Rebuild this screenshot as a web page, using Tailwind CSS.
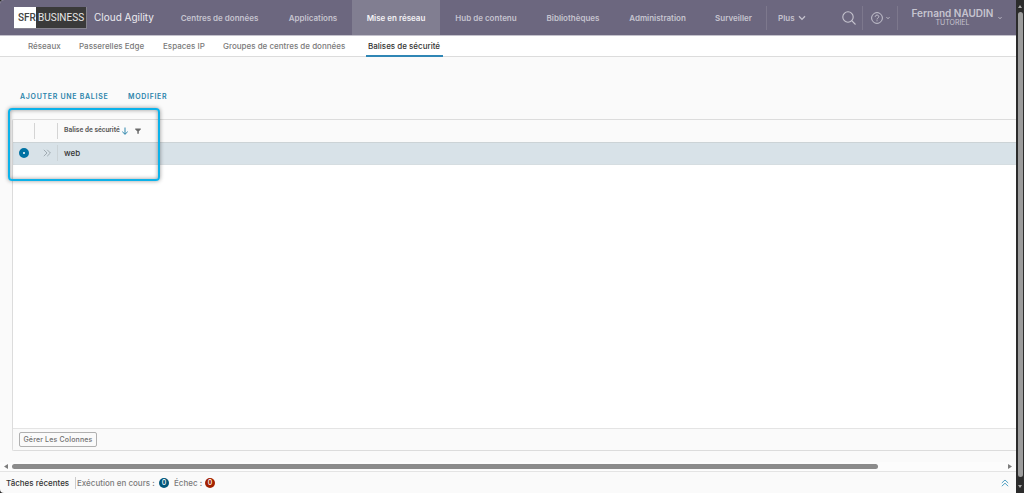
<!DOCTYPE html>
<html lang="fr">
<head>
<meta charset="utf-8">
<meta name="viewport" content="width=device-width, initial-scale=1">
<title>Cloud Agility – Balises de sécurité</title>
<script src="https://cdn.jsdelivr.net/npm/@tailwindcss/browser@4"></script>
</head>
<body class="flex h-screen overflow-hidden bg-[#2b2b2b] font-['Inter',sans-serif] text-[8px] text-[#565656]">
<div class="flex min-w-0 flex-1 flex-col overflow-hidden rounded-l-[4px] bg-[#fafafa]">
  <header class="flex h-9 shrink-0 items-center border-b border-[#c4c2cc] bg-[#6c677f] font-semibold text-[#c6c4cf]">
    <a href="#" class="ml-[14px] flex h-[22px] w-[73px] shrink-0 border-r border-b border-[#85838f] bg-[#3a3a3a] font-['Roboto',sans-serif] text-[10px] leading-[22px] font-normal text-[#e8e8e8]">
      <span class="w-[22px] bg-white pl-1 font-medium text-[#444]">SFR</span><span class="pl-[2px]">BUSINESS</span>
    </a>
    <span class="ml-[7px] w-[71px] shrink-0 text-[10px] font-normal whitespace-nowrap text-[#ebeaf0]">Cloud Agility</span>
    <nav class="flex h-full shrink-0 items-center whitespace-nowrap" aria-label="Principal">
      <a href="#" class="flex h-full w-[109px] items-center justify-center">Centres de données</a>
      <a href="#" class="flex h-full w-[78px] items-center justify-center">Applications</a>
      <a href="#" aria-current="page" class="flex h-full w-[88px] items-center justify-center bg-[#817e91] text-[#f3f2f5]">Mise en réseau</a>
      <a href="#" class="flex h-full w-[92px] items-center justify-center">Hub de contenu</a>
      <a href="#" class="flex h-full w-[82px] items-center justify-center">Bibliothèques</a>
      <a href="#" class="flex h-full w-[87px] items-center justify-center">Administration</a>
      <a href="#" class="flex h-full w-[65px] items-center justify-center">Surveiller</a>
      <button type="button" class="flex h-6 items-center gap-[3px] border-l border-[#7d788d] pl-[11px]">Plus
        <svg class="h-2 w-2" viewBox="0 0 8 8" fill="none" stroke="currentColor" stroke-width="1.3"><path d="M1 2.2 4 5.4 7 2.2"/></svg>
      </button>
    </nav>
    <div class="ml-auto flex h-6 shrink-0 items-center">
      <button type="button" aria-label="Rechercher" class="pr-[6px]">
        <svg class="h-[14px] w-[14px]" viewBox="0 0 14 14" fill="none" stroke="currentColor" stroke-width="1.1"><circle cx="6" cy="6" r="5.2"/><path d="m9.7 9.7 3.8 3.8"/></svg>
      </button>
      <button type="button" aria-label="Aide" class="flex h-6 w-9 items-center gap-[3px] border-x border-[#7d788d] pl-2">
        <svg class="h-3 w-3 shrink-0" viewBox="0 0 12 12" fill="none" stroke="currentColor" stroke-width="1"><circle cx="6" cy="6" r="5.4"/><path d="M4.2 4.8c0-2.3 3.6-2.3 3.6-.1 0 1.2-1.8 1.3-1.8 2.7M6 8.3v1"/></svg>
        <svg class="h-1 w-1 shrink-0" viewBox="0 0 4 4" fill="none" stroke="currentColor" stroke-width=".8"><path d="m.4 1 1.6 1.8L3.6 1"/></svg>
      </button>
      <button type="button" class="flex h-full items-center gap-1 pr-[14px] pl-[13px] whitespace-nowrap">
        <span class="flex w-[83px] flex-col items-center"><span class="text-[10px] leading-[11px]">Fernand NAUDIN</span><span class="text-[7px] leading-[8px] font-normal">TUTORIEL</span></span>
        <svg class="h-1 w-1" viewBox="0 0 4 4" fill="none" stroke="currentColor" stroke-width=".8"><path d="m.4 1 1.6 1.8L3.6 1"/></svg>
      </button>
    </div>
  </header>

  <nav class="flex h-[21px] shrink-0 items-stretch gap-[10px] border-b border-[#dcdcdc] bg-white pl-[26px] leading-[20px] font-medium whitespace-nowrap text-[#7a7a7a]" aria-label="Réseau">
    <a href="#" class="w-[41px] px-[2px]">Réseaux</a>
    <a href="#" class="w-[74px] px-[2px]">Passerelles Edge</a>
    <a href="#" class="w-[50px] px-[2px]">Espaces IP</a>
    <a href="#" class="w-[135px] px-[2px]">Groupes de centres de données</a>
    <a href="#" aria-current="page" class="-mb-px w-[77px] border-b-2 border-[#2f86b5] px-[2px] text-[#333]">Balises de sécurité</a>
  </nav>

  <main class="flex min-h-0 flex-1 flex-col pl-3">
    <div class="mt-8 flex h-[30px] items-start gap-4 pt-[2px] pl-2 text-[7px] font-semibold tracking-widest text-[#2b84ab]">
      <button type="button" class="w-[92px] text-left leading-3 whitespace-nowrap">AJOUTER UNE BALISE</button>
      <button type="button" class="leading-3">MODIFIER</button>
    </div>
    <section class="relative flex min-h-0 flex-1 flex-col rounded-l-[2px] border border-r-0 border-[#dcdcdc] bg-white">
      <table class="w-full border-collapse text-left">
        <thead>
          <tr class="h-[22px] border-b border-[#ccd3d6] bg-[#fafafa]">
            <th class="w-[22px] p-0" aria-label="Sélection"><div class="h-4 border-r border-[#d4d4d4]"></div></th>
            <th class="w-[23px] p-0" aria-label="Détails"><div class="h-4 border-r border-[#d4d4d4]"></div></th>
            <th class="p-0 pl-[6px]">
              <div class="flex items-center gap-[2px] text-[7px] leading-3 font-semibold text-[#565656]">
                <span class="-mt-[2px] w-[55px] font-['Roboto',sans-serif] whitespace-nowrap">Balise de sécurité</span>
                <svg class="h-2 w-2" viewBox="0 0 8 8" fill="none" stroke="#2b84ab" stroke-width="1"><path d="M4 .5v6.7M1.3 4.7 4 7.3l2.7-2.6"/></svg>
                <button type="button" aria-label="Filtrer" class="ml-1"><svg class="h-[6px] w-[6px]" viewBox="0 0 6 6" fill="#6b6b6b"><path d="M.2.4h5.6v1L3.8 3.2v2.5H2.3V3.2L.2 1.4z"/></svg></button>
              </div>
            </th>
          </tr>
        </thead>
        <tbody>
          <tr class="h-[22px] border-b border-[#d5dde1] bg-[#d8e2e8]">
            <td class="p-0 pl-[6px]"><input type="radio" name="balise" checked aria-label="Sélectionner web" class="block h-[10px] w-[10px] appearance-none rounded-full border-[4px] border-[#0072a3] bg-white"></td>
            <td class="p-0"><div class="flex h-4 items-center border-r border-[#cbd3d7] pl-2"><button type="button" aria-label="Ouvrir les détails"><svg class="block h-2 w-2" viewBox="0 0 8 8" fill="none" stroke="#9aa5ab" stroke-width=".9"><path d="M.8.8 4 4 .8 7.2M4.2.8 7.4 4 4.2 7.2"/></svg></button></div></td>
            <td class="p-0 pl-[6px] font-medium text-[#333]">web</td>
          </tr>
        </tbody>
      </table>
      <div class="mt-auto flex h-[22px] items-center border-t border-[#e4e4e4] bg-[#fafafa] pl-[6px]">
        <button type="button" class="h-[15px] w-[78px] rounded-[2px] border border-[#b0b0b0] text-[7px] leading-3 font-medium tracking-wide whitespace-nowrap text-[#707070]">Gérer Les Colonnes</button>
      </div>
      <div class="pointer-events-none absolute -top-3 -left-[5px] h-[73px] w-[152px] rounded-[4px] border-2 border-[#0bb2ea] shadow-[0_0_4px_rgba(0,0,0,.4),inset_0_0_4px_rgba(0,0,0,.4)]"></div>
    </section>
  </main>

  <div class="mt-[11px] flex h-[9px] shrink-0 items-center gap-1 bg-[#fcfcfc] px-1" role="presentation">
    <svg class="h-[5px] w-1" viewBox="0 0 4 5" fill="#7d7d7d"><path d="M4 0v5L0 2.5z"/></svg>
    <div class="flex-1"><div class="h-[5px] w-[87.3%] rounded-full bg-[#8b8b8b]"></div></div>
    <svg class="h-[5px] w-1" viewBox="0 0 4 5" fill="#7d7d7d"><path d="M0 0v5l4-2.5z"/></svg>
  </div>
  <footer class="flex h-[22px] shrink-0 items-center border-t border-[#e4e4e4] pr-[7px] pl-[6px] leading-3 font-medium whitespace-nowrap text-[#7a7a7a]">
    <span class="w-[69px] text-[#333]">Tâches récentes</span>
    <span class="mr-[5px] flex h-3 items-center border-l border-[#ccc] pl-px"><span class="w-[82px]">Exécution en cours :</span><span class="flex h-[10px] w-[10px] items-center justify-center rounded-full bg-[#00567a] text-[7px] text-white">0</span></span>
    <span class="flex items-center"><span class="w-[31px]">Échec :</span><span class="flex h-[10px] w-[10px] items-center justify-center rounded-full bg-[#a32100] text-[7px] text-white">0</span></span>
    <button type="button" aria-label="Développer les tâches" class="ml-auto"><svg class="block h-2 w-2" viewBox="0 0 8 8" fill="none" stroke="#3f97bd" stroke-width=".9"><path d="M.8 4 4 1l3.2 3M.8 7.2 4 4.2l3.2 3"/></svg></button>
  </footer>
</div>
<div class="flex w-2 shrink-0 flex-col items-center gap-1 py-[5px]" role="presentation">
  <svg class="h-[3px] w-1 shrink-0" viewBox="0 0 4 3" fill="#a8a8a8"><path d="M2 0l2 3H0z"/></svg>
  <div class="w-[5px] flex-1 rounded-full bg-[#9c9c9c]"></div>
  <svg class="mt-1 h-[3px] w-1 shrink-0" viewBox="0 0 4 3" fill="#a8a8a8"><path d="M2 3l2-3H0z"/></svg>
</div>
</body>
</html>
